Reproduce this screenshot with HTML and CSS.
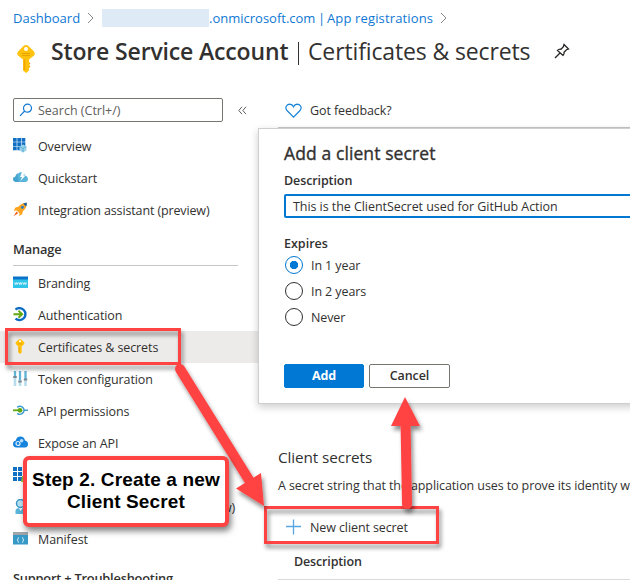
FILE: index.html
```html
<!DOCTYPE html>
<html lang="en">
<head>
<meta charset="utf-8">
<title>Certificates &amp; secrets</title>
<link rel="stylesheet" href="styles.css">
</head>
<body>
<div class="page">
  <header class="header">
    <nav class="crumbs">
      <a class="crumb-dash">Dashboard</a>
      <svg class="chev" width="8" height="12" viewBox="0 0 8 12"><path d="M1 1l5 5L1 11"/></svg>
      <span class="redacted"></span>
      <a class="crumb-tenant">.onmicrosoft.com</a>
      <a class="crumb-bar">|</a>
      <a class="crumb-app">App registrations</a>
      <svg class="chev last" width="8" height="12" viewBox="0 0 8 12"><path d="M1 1l5 5L1 11"/></svg>
    </nav>
    <div class="titlebar">
      <svg class="title-key" width="20" height="30" viewBox="0 0 20 30"><path fill="#ffc20e" d="M8 1.500Q10 .3 12 1.500L18 7.500Q19.500 9.500 18 11.500L13 15.500V26.500L10 29L7 26.500V15.500L2 11.500Q.5 9.500 2 7.500Z"/><circle cx="10" cy="5" r="2" fill="#fff"/><path d="M6 9.500h8M6 11.500h8" stroke="#e9a400"/><path d="M8.500 15.500v10.500" stroke="#f5a300" stroke-width="1.500"/><path d="M13 18l1.500 1.500-1.500 1.500 1.500 1.500-1.500 1.500z" fill="#f6a900"/></svg>
      <h1 class="title">Store Service Account</h1>
      <span class="title-bar"></span>
      <span class="subtitle">Certificates &amp; secrets</span>
      <svg class="pin" width="16" height="16" viewBox="0 0 16 16"><path d="M10 1.500L14.500 6L12.500 6.700L10 9.200Q10.500 11.500 9 12.500L3.500 7.500Q5 5.800 7 6.300L9.400 3.700ZM6 10L1 15"/></svg>
    </div>
  </header>
  <div class="body">
    <aside class="side">
      <div class="searchrow">
        <div class="search">
          <svg width="14" height="14" viewBox="0 0 14 14"><circle cx="8.500" cy="5.200" r="4"/><path d="M5.700 8L1 12.800"/></svg>
          <span class="search-text">Search (Ctrl+/)</span>
        </div>
        <svg class="collapse" width="9" height="9" viewBox="0 0 9 9"><path d="M4 .8L.8 4.500L4 8.200M8 .8L4.800 4.500L8 8.200"/></svg>
      </div>
      <ul class="menu">
        <li class="item"><svg class="ico" viewBox="0 0 15 15"><path fill="#0f6fc5" d="M0 0h3.700v3.700H0zM4.300 0h3.700v3.700h-3.700zM8.600 0h3.700v3.700H8.600zM0 4.300h3.700v3.700H0zM4.300 4.300h3.700v3.700h-3.700zM8.600 4.300h3.700v3.700H8.600zM0 8.600h3.700v3.700H0zM4.300 8.600h3.700v3.700h-3.700z"/><path fill="#9ad3ea" d="M10 6.500L13.500 8.500v4L10 14.500 6.500 12.500v-4z"/><path fill="none" stroke="#4aa6cf" stroke-width=".8" d="M6.800 8.700l3.200 1.800 3.200-1.800M10 10.500v3.700"/></svg><span class="t-item">Overview</span></li>
        <li class="item"><svg class="ico" viewBox="0 0 15 15"><path fill="#59b4d9" d="M2.500 12Q0 11.500 0 9.200Q0 7 2.300 6.700Q3 3.500 5.500 3.200Q7 1.800 9.200 2.300Q11.500 3 12 5.500Q15 6.500 15 9.200Q15 11.700 12.500 12Z"/><path fill="#3999c6" d="M2.500 12Q0 11.500 0 9.200Q0 7 2.300 6.700L4 4 6 12Z" opacity=".6"/><path fill="#fff" d="M9 2l2.500 0-1 3.500h2L7.500 11l1.500-4H7z"/></svg><span class="t-item">Quickstart</span></li>
        <li class="item"><svg class="ico" viewBox="0 0 16 16"><path fill="#ffa51f" d="M14.800.8Q9 .8 5.800 5L2.500 5.800.8 9.300 4 9 7 12l-.5 3L9.800 13l.7-3.200Q14.800 6.500 14.800.8Z"/><path fill="#1d5fa5" d="M14.800.8Q12.500.7 10.800 1.800L14 4.700Q14.900 3 14.800.8Z"/><circle cx="10" cy="5.700" r="1.600" fill="#2b7dc8"/><path d="M3.800 10L.5 15.300 5.500 12z" fill="#f2601d"/></svg><span class="t-integ">Integration assistant (preview)</span></li>
      </ul>
      <h2 class="group">Manage</h2>
      <ul class="menu managed">
        <li class="item"><svg class="ico" viewBox="0 0 15 15"><path fill="#32c5ea" d="M0 4h15v9H0z"/><path fill="#0a72c8" d="M0 1.500h15v3H0z"/><path d="M1.500 7.500l.9 2 .9-2 .9 2 .9-2M5.800 7.500l.8 2 .8-2 .8 2 .8-2M9.900 7.500l.9 2 .9-2 .9 2 .9-2" stroke="#fff" stroke-width=".8" fill="none"/></svg><span class="t-item">Branding</span></li>
        <li class="item"><svg class="ico" viewBox="0 0 15 15"><path d="M2.500 2.600A6 6 0 1 1 2.500 11.700" fill="none" stroke="#0a6ac4" stroke-width="2.400"/><path d="M.5 7.200h8.500M5.500 3.700l3.700 3.500-3.700 3.500" fill="none" stroke="#62a813" stroke-width="1.900"/></svg><span class="t-item">Authentication</span></li>
        <li class="item active"><svg class="ico" viewBox="0 0 15 15"><path fill="#ffc20e" d="M7 0Q8 0 11 3Q12 4.200 11 5.300L8.700 7.500V13.500L7 15 5.300 13.500V7.500L3 5.300Q2 4.200 3 3Q6 0 7 0Z"/><circle cx="7" cy="2.300" r="1" fill="#fff"/><path d="M5 4.900h4M6.200 8v5.500" stroke="#eda400" stroke-width=".9"/></svg><span class="t-item">Certificates &amp; secrets</span></li>
        <li class="item"><svg class="ico" viewBox="0 0 15 15"><path d="M2 0v15M7 0v15M12.500 0v15" stroke="#b9dcec" stroke-width="2.600"/><path d="M2 0v5M7 0v9M12.500 0v8" stroke="#62b5d8" stroke-width="2"/><path d="M.3 6h3.400M5.300 10.500h3.400M10.800 8.500h3.400" stroke="#7b8790" stroke-width="1.800"/></svg><span class="t-item">Token configuration</span></li>
        <li class="item"><svg class="ico" viewBox="0 0 15 15"><path d="M4.300 4.300A4 4 0 1 1 4.300 10.300M11.500 7.300H15" fill="none" stroke="#3f9bcf" stroke-width="1.600"/><path d="M0 7.300h5" stroke="#62a813" stroke-width="1.800"/><circle cx="7" cy="7.300" r="2.400" fill="#62a813"/></svg><span class="t-item">API permissions</span></li>
        <li class="item"><svg class="ico" viewBox="0 0 15 15"><path fill="#1683dc" d="M3.500 12.500Q0 12.200 0 9Q0 6.200 2.700 5.800Q3.500 1.500 7.500 1.500Q11.200 1.500 12 5.500Q15 6 15 9Q15 12.200 12 12.500Z"/><circle cx="5" cy="8.500" r="2" fill="none" stroke="#dff1ff" stroke-width="1.200"/><circle cx="8.600" cy="5.800" r="1.800" fill="#b8ddfa"/></svg><span class="t-item">Expose an API</span></li>
        <li class="item"><svg class="ico" viewBox="0 0 15 15"><path fill="#0f6fc5" d="M0 0h4v4H0zM5 0h4v4H5zM10 0h4v4h-4zM0 5h4v4H0zM5 5h4v4H5zM0 10h4v4H0zM5 10h4v4H5z"/><path fill="#92c83e" d="M9 9h6v6H8z"/></svg></li>
        <li class="item"><svg class="ico" viewBox="0 0 15 15"><circle cx="7.500" cy="4.500" r="4" fill="#b8e2f3" stroke="#3999c6" stroke-width="1.500"/><path fill="#59b4d9" d="M2.500 15V11.500Q3 9 6 9l1.500 3 2-3q4 .5 4 4v2z"/></svg><span class="roles-end">w)</span></li>
        <li class="item"><svg class="ico" viewBox="0 0 15 15"><path fill="#3999c6" d="M0 4h15v9.500H0z"/><path fill="#9fa5a9" d="M0 1h15v3H0z"/><path fill="none" stroke="#d9f2fb" stroke-width=".9" d="M6 6.500Q5 6.500 5 7.700Q5 9 4 9Q5 9 5 10.300Q5 11.500 6 11.500M9 6.500Q10 6.500 10 7.700Q10 9 11 9Q10 9 10 10.300Q10 11.500 9 11.500"/></svg><span class="t-item">Manifest</span></li>
      </ul>
      <h2 class="group support">Support + Troubleshooting</h2>
    </aside>
    <main class="main">
      <div class="feedback">
        <svg width="18" height="16" viewBox="0 0 18 16"><path d="M8.500 14.200L2 7.500Q.1 5.300 1.400 3Q2.700 1.100 4.800 1.100Q7.300 1.200 8.500 3.800Q9.700 1.200 12.200 1.100Q14.300 1.100 15.600 3Q16.900 5.300 15 7.500Z" fill="none" stroke="#1583d8" stroke-width="1.200"/></svg>
        <span class="t-feedback">Got feedback?</span>
      </div>
      <section class="secrets">
        <h3 class="secrets-title">Client secrets</h3>
        <p class="secrets-text">A secret string that the application uses to prove its identity w</p>
        <div class="new">
          <svg width="16" height="16" viewBox="0 0 16 16"><path d="M7.500 .5v15M0 7.500h15" stroke="#55a6e3" stroke-width="1.300"/></svg>
          <span class="t-new">New client secret</span>
        </div>
        <div class="thead">Description</div>
      </section>
    </main>
  </div>

  <section class="dialog">
    <h3 class="dialog-title">Add a client secret</h3>
    <div class="label">Description</div>
    <div class="input"><span class="t-input">This is the ClientSecret used for GitHub Action</span></div>
    <div class="label expires">Expires</div>
    <div class="radio on"><i></i><span>In 1 year</span></div>
    <div class="radio"><i></i><span>In 2 years</span></div>
    <div class="radio"><i></i><span>Never</span></div>
    <div class="buttons"><span class="btn primary">Add</span><span class="btn">Cancel</span></div>
  </section>

  <svg class="marks" width="630" height="580" viewBox="0 0 630 580">
    <defs><filter id="shadow" x="-20%" y="-20%" width="150%" height="150%"><feDropShadow dx="2" dy="4" stdDeviation="2.200" flood-color="#000" flood-opacity=".45"/></filter></defs>
    <g filter="url(#shadow)"><rect x="6.500" y="329.500" width="173" height="34" fill="none" stroke="#ff4343" stroke-width="3"/></g>
    <g filter="url(#shadow)"><rect x="265.500" y="507.500" width="172" height="35" fill="none" stroke="#ff4343" stroke-width="3"/></g>
    <g filter="url(#shadow)"><path d="M180 369L249 480" stroke="#ff4343" stroke-width="10" stroke-linecap="round"/><path d="M264 506L236 488.500L261 473Z" fill="#ff4343"/></g>
    <g filter="url(#shadow)"><path d="M407 504L405.500 420" stroke="#ff4343" stroke-width="10" stroke-linecap="round"/><path d="M405 397L420 426H391Z" fill="#ff4343"/></g>
  </svg>
  <div class="callout">Step 2. Create a new<br>Client Secret</div>
</div>
</body>
</html>
```
FILE: styles.css
```css
* { box-sizing: border-box; }
body { margin: 0; background: #fff; }
.page {
  position: relative; width: 630px; height: 580px; overflow: hidden;
  font-family: "Open Sans", "Noto Sans", sans-serif; font-size: 12.5px; color: #323130;
  white-space: nowrap; letter-spacing: -0.1px;
}
h1, h2, h3, p, ul { margin: 0; padding: 0; font-weight: 400; }
ul { list-style: none; }
svg { flex: none; display: block; }

.header { height: 94px; }
.crumbs { display: flex; align-items: center; height: 36px; padding-left: 13px; color: #0f78d4; font-size: 13px; }
.chev { fill: none; stroke: #8a8886; margin: 0 7px 0 8px; }
.chev.last { margin-left: 7px; }
.redacted { width: 107px; height: 18px; background: #deebf7; }
.crumb-dash { width: 66px; letter-spacing: 0; }
.crumb-tenant { width: 107px; letter-spacing: 0; }
.crumb-bar { width: 11px; text-align: center; }
.crumb-app { letter-spacing: 0.14px; width: 106px; }
.titlebar { display: flex; align-items: center; height: 30px; padding-left: 16px; font-size: 23px; line-height: 30px; }
.title-key { margin: 16px 15px 0 0; }
.title { font-size: 23px; font-weight: 600; width: 244px; letter-spacing: -0.15px; }
.title-bar { width: 1px; height: 23px; background: #323130; margin: 4px 9px 0 3px; }
.subtitle { width: 246px; letter-spacing: -0.13px; }
.pin { fill: none; stroke: #252423; stroke-width: 1.3; }

.body { display: flex; height: 486px; }
.side { width: 258px; flex: none; }
.searchrow { display: flex; align-items: center; gap: 15px; height: 32px; padding-left: 13px; }
.search { display: flex; align-items: center; gap: 5px; width: 210px; height: 24px; padding-left: 5px; border: 1px solid #77756f; border-radius: 2px; color: #605e5c; }
.search-text { letter-spacing: 0; }
.search svg { fill: none; stroke: #0f78d4; stroke-width: 1.2; }
.collapse { fill: none; stroke: #605e5c; }
.menu { padding-top: 4px; }
.item { display: flex; align-items: center; gap: 10px; height: 32px; padding-left: 13px; }
.item.active { background: #edebe9; }
.t-integ { letter-spacing: -0.13px; }
.ico { width: 15px; height: 15px; margin-top: -1px; }
.roles-end { margin-left: 184px; }
.group { height: 40px; margin-left: 13px; width: 225px; padding-top: 4px; line-height: 38px; font-size: 12.8px; font-weight: 600; border-bottom: 1px solid #c8c6c4; }
.managed { padding-top: 1px; }
.support { border: 0; line-height: 39px; letter-spacing: -0.2px; }

.main { flex: 1; min-width: 0; padding-left: 20px; overflow: hidden; }
.feedback { display: flex; align-items: center; gap: 7px; height: 34px; padding-left: 7px; border-bottom: 1px solid #c8c6c4; }
.secrets { padding-top: 318px; }
.secrets-title { font-size: 15.3px; line-height: 22px; }
.secrets-text { margin-top: 8px; line-height: 20px; }
.new { display: flex; align-items: center; gap: 8px; height: 32px; margin-top: 15px; padding-left: 8px; }
.thead { height: 37px; padding-left: 16px; line-height: 38px; font-weight: 600; letter-spacing: -0.15px; border-bottom: 1px solid #dddbd9; }

.dialog { position: absolute; left: 258px; top: 128px; width: 400px; height: 276px; padding: 12px 0 0 25px; background: #fff; border: 1px solid #cfcfcf; box-shadow: 0 3px 8px rgba(0,0,0,.2); }
.dialog-title { font-size: 17.5px; line-height: 24px; letter-spacing: 0.1px; -webkit-text-stroke: 0.35px #323130; }
.label { font-weight: 600; line-height: 18px; margin-top: 7px; }
.input { display: flex; align-items: center; height: 24px; margin-top: 4px; padding-left: 7px; border: 2px solid #0078d4; border-radius: 2px; }
.t-input { letter-spacing: -0.06px; }
.label.expires { margin-top: 17px; margin-bottom: -1px; letter-spacing: 0; }
.radio { display: flex; align-items: center; gap: 8px; height: 26px; padding-left: 1px; }
.radio i { width: 18px; height: 18px; border: 1px solid #323130; border-radius: 50%; }
.radio.on i { border-color: #0078d4; background: radial-gradient(circle, #0078d4 3.800px, transparent 4.500px); }
.buttons { display: flex; gap: 5px; margin-top: 34px; }
.btn { width: 81px; height: 24px; border: 1px solid #77756f; border-radius: 2px; text-align: center; line-height: 22px; font-weight: 600; }
.btn.primary { width: 80px; background: #0078d4; border-color: #0078d4; color: #fff; font-weight: 700; }

.marks { position: absolute; left: 0; top: 0; }
.callout { position: absolute; left: 23px; top: 456px; width: 206px; height: 71px; padding-top: 9px; background: #fff; border: 4px solid #ff4343; border-radius: 6px; box-shadow: 2px 4px 6px rgba(0,0,0,.5); font: bold 19px/22px "Liberation Sans", Arial, sans-serif; letter-spacing: 0.15px; color: #000; text-align: center; }
```
